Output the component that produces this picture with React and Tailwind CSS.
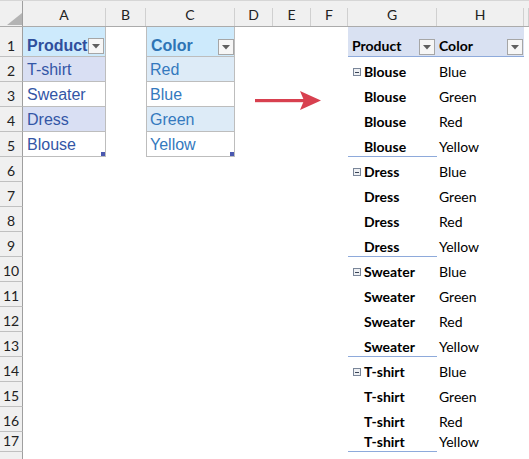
import React from "react";

const COLS = "grid grid-cols-[23px_83px_40px_89px_38px_38px_37px_89px_87px_5px]";
const LETTERS = ["A", "B", "C", "D", "E", "F", "G", "H", ""];

const t1 = ["T-shirt", "Sweater", "Dress", "Blouse"];
const t2 = ["Red", "Blue", "Green", "Yellow"];
const products = ["Blouse", "Dress", "Sweater", "T-shirt"];
const colors = ["Blue", "Green", "Red", "Yellow"];

function FilterBtn() {
  return (
    <div className="w-[16px] h-[16px] border border-[#a6a6a6] bg-[#f6f6f6] flex items-center justify-center shrink-0">
      <svg width="8" height="5" viewBox="0 0 8 5">
        <polygon points="0,0 8,0 4,4.5" fill="#5f5f5f" />
      </svg>
    </div>
  );
}

function MinusBox() {
  return (
    <div className="absolute left-[5px] bottom-[6px] w-[8px] h-[8px] border border-[#7a8699] bg-[#eef0f3] flex items-center justify-center">
      <div className="w-[4px] h-[1px] bg-[#3b4658]" />
    </div>
  );
}

function RowHead({ n }) {
  return (
    <div className="bg-[#f0f0f0] border-r border-b border-r-[#9f9f9f] border-b-[#c0c0c0] flex items-end justify-center pb-[3px] text-[14px] leading-none text-[#222] font-['Lato',sans-serif]">
      {n}
    </div>
  );
}

function Row({ n }) {
  const isHeader = n === 1;
  const idx = n - 2;
  const hClass = n === 1 ? "h-[30px]" : n === 17 ? "h-[20px]" : "h-[25px]";

  let cellA = <div />;
  if (isHeader) {
    cellA = (
      <div className="bg-[#cdeafc] border-r border-b border-[#bdbdbd] flex items-end justify-between pl-[4px] pr-[1px] pb-[2px]">
        <span className="font-['Liberation_Sans',Arial,sans-serif] font-bold text-[16px] leading-none text-[#2f4f9c] pb-[0px]">Product</span>
        <FilterBtn />
      </div>
    );
  } else if (idx >= 0 && idx < 4) {
    const band = idx % 2 === 0 ? "bg-[#d9dff3]" : "bg-white";
    cellA = (
      <div className={band + " relative border-r border-b border-[#bdbdbd] flex items-end pl-[4px] pb-[3px]"}>
        <span className="font-['Liberation_Sans',Arial,sans-serif] text-[16px] leading-none text-[#3356a6]">{t1[idx]}</span>
        {idx === 3 && <div className="absolute right-0 bottom-0 w-[4px] h-[4px] bg-[#4a58b0]" />}
      </div>
    );
  }

  let cellC = <div />;
  if (isHeader) {
    cellC = (
      <div className="bg-[#cdeafc] border-l border-r border-b border-[#bdbdbd] flex items-end justify-between pl-[4px] pr-[0px] pb-[1px]">
        <span className="font-['Liberation_Sans',Arial,sans-serif] font-bold text-[16px] leading-none text-[#2e74b5] pb-[1px]">Color</span>
        <FilterBtn />
      </div>
    );
  } else if (idx >= 0 && idx < 4) {
    const band = idx % 2 === 0 ? "bg-[#ddebf7]" : "bg-white";
    cellC = (
      <div className={band + " relative border-l border-r border-b border-[#bdbdbd] flex items-end pl-[3px] pb-[3px]"}>
        <span className="font-['Liberation_Sans',Arial,sans-serif] text-[16px] leading-none text-[#3479be]">{t2[idx]}</span>
        {idx === 3 && <div className="absolute right-0 bottom-0 w-[4px] h-[4px] bg-[#4a58b0]" />}
      </div>
    );
  }

  let cellG = <div />;
  let cellH = <div />;
  const pv = "font-['Lato',sans-serif] text-[14px] leading-none text-black";
  if (isHeader) {
    cellG = (
      <div className="bg-[#d9e1f2] border-b border-[#8eaadb] flex items-end justify-between pl-[4px] pr-[2px] pb-[1px]">
        <span className={pv + " font-bold pb-[2px]"}>Product</span>
        <FilterBtn />
      </div>
    );
    cellH = (
      <div className="bg-[#d9e1f2] border-b border-[#8eaadb] flex items-end justify-between pl-[2px] pr-[1px] pb-[1px]">
        <span className={pv + " font-bold pb-[2px]"}>Color</span>
        <FilterBtn />
      </div>
    );
  } else {
    const p = Math.floor(idx / 4);
    const c = idx % 4;
    const first = c === 0;
    const last = c === 3;
    cellG = (
      <div className={"relative flex items-end pl-[16px] " + (last ? "border-b border-[#8eaadb] pb-[2px]" : "pb-[3px]")}>
        {first && <MinusBox />}
        <span className={pv + " font-bold"}>{products[p]}</span>
      </div>
    );
    cellH = (
      <div className="flex items-end pl-[2px] pb-[3px]">
        <span className={pv}>{colors[c]}</span>
      </div>
    );
  }

  return (
    <div className={COLS + " " + hClass}>
      <RowHead n={n} />
      {cellA}
      <div />
      {cellC}
      <div />
      <div />
      <div />
      {cellG}
      {cellH}
      <div />
    </div>
  );
}

export default function App() {
  const rows = Array.from({ length: 17 }, (_, i) => i + 1);
  return (
    <div className="relative w-[529px] h-[459px] overflow-hidden bg-white">
      <div className={COLS + " h-[27px] bg-[#f0f0f0] border-t border-[#d6d6d6] border-b border-b-[#ababab]"}>
        <div className="relative border-r border-[#9f9f9f]">
          <svg className="absolute left-[7px] top-[12px]" width="15" height="12" viewBox="0 0 15 12">
            <polygon points="0,12 15,12 15,0" fill="#b4b4b4" />
          </svg>
        </div>
        {LETTERS.map((l, i) => (
          <div
            key={i}
            className="mt-[7px] border-r border-[#d0d0d0] flex items-end justify-center pb-[4px] text-[14px] leading-none text-[#222] font-['Lato',sans-serif]"
          >
            {l}
          </div>
        ))}
      </div>
      {rows.map((n) => (
        <Row key={n} n={n} />
      ))}
      <div className={COLS + " h-[20px]"}>
        <div className="bg-[#f0f0f0] border-r border-[#9f9f9f]" />
      </div>

      <svg className="absolute left-[252px] top-[88px]" width="74" height="26" viewBox="0 0 74 26">
        <rect x="3" y="11" width="50" height="3.2" fill="#d8404f" />
        <polygon points="48,3 69,12.6 48,22 52,12.6" fill="#d8404f" />
      </svg>
    </div>
  );
}
